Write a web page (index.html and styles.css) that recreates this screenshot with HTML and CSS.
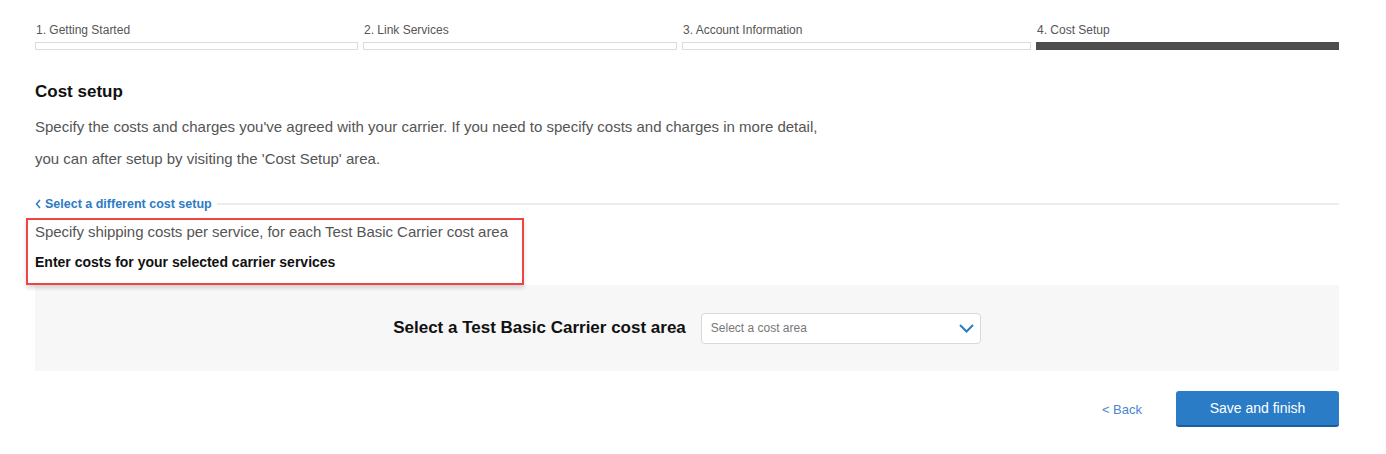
FILE: index.html
```html
<!DOCTYPE html>
<html lang="en">
    <head>
        <meta name="viewport" content="width=device-width, initial-scale=1">
        <title>Cost Setup</title>
        <link rel="stylesheet" href="styles.css">
    </head>
    <body>
        <div class="page">
            <div class="steps">
                <div class="step s-1">
                    <span class="stepLabel">1. Getting Started</span>
                    <div class="stepBar"></div>
                </div>
                <div class="step s-2">
                    <span class="stepLabel">2. Link Services</span>
                    <div class="stepBar"></div>
                </div>
                <div class="step s-3">
                    <span class="stepLabel">3. Account Information</span>
                    <div class="stepBar"></div>
                </div>
                <div class="step s-4 active">
                    <span class="stepLabel">4. Cost Setup</span>
                    <div class="stepBar"></div>
                </div>
            </div>

            <h2>Cost setup</h2>
            <p class="intro">Specify the costs and charges you've agreed with your carrier. If you need to specify costs and charges in more detail,<br>you can after setup by visiting the 'Cost Setup' area.</p>

            <div class="backRow">
                <a class="backLink" href="#">
                    <svg width="6" height="10" viewBox="0 0 6 10"><path d="M5 1 L1.5 5 L5 9" fill="none" stroke="#2d7bc4" stroke-width="1.5"/></svg>
                    Select a different cost setup
                </a>
                <div class="rule"></div>
            </div>

            <div class="highlight">
                <div class="subIntro">Specify shipping costs per service, for each Test Basic Carrier cost area</div>
                <div class="subTitle">Enter costs for your selected carrier services</div>
            </div>

            <div class="areaPanel">
                <label for="costArea">Select a Test Basic Carrier cost area</label>
                <div class="selectBox" id="costArea">
                    <span>Select a cost area</span>
                    <svg width="15" height="9" viewBox="0 0 15 9"><path d="M1 1 L7.5 7.5 L14 1" fill="none" stroke="#2d7bc4" stroke-width="2"/></svg>
                </div>
            </div>

            <div class="actions">
                <a class="prevLink" href="#">&lt; Back</a>
                <button type="button">Save and finish</button>
            </div>
        </div>
    </body>
</html>
```

FILE: styles.css
```css
body, html {
    padding: 0;
    margin: 0;
    font-family: "Liberation Sans", Arial, sans-serif;
    background: #fff;
}
* {
    box-sizing: border-box;
}
.page {
    width: 1304px;
    margin-left: 35px;
    padding-top: 22px;
}
.steps {
    display: flex;
    gap: 5px;
}
.step {
    display: flex;
    flex-direction: column;
}
.s-1 { width: 323px; }
.s-2 { width: 314px; }
.s-3 { width: 349px; }
.s-4 { width: 303px; }
.stepLabel {
    font-size: 12px;
    line-height: 16px;
    color: #555;
    padding-left: 1px;
}
.stepBar {
    margin-top: 4px;
    height: 8px;
    border: 1px solid #dcdcdc;
    background: #fff;
}
.step.active .stepBar {
    background: #4d4d4d;
    border-color: #4d4d4d;
}
h2 {
    margin: 32px 0 0 0;
    font-size: 17px;
    line-height: 20px;
    color: #111;
}
.intro {
    margin: 9px 0 0 0;
    font-size: 15px;
    line-height: 32px;
    color: #555;
}
.backRow {
    display: flex;
    align-items: center;
    margin-top: 21px;
    height: 16px;
}
.backLink {
    display: flex;
    align-items: center;
    gap: 4px;
    font-size: 12.5px;
    font-weight: bold;
    color: #2d7bc4;
    text-decoration: none;
    white-space: nowrap;
}
.rule {
    flex: 1;
    height: 2px;
    background: #ececec;
    margin-left: 5px;
}
.highlight {
    margin: 6px 0 0 -9px;
    width: 498px;
    border: 2px solid #ee4444;
    padding: 2px 0 0 7px;
    height: 67px;
    box-shadow: 0 3px 4px rgba(0, 0, 0, 0.15);
    position: relative;
    z-index: 1;
}
.subIntro {
    font-size: 15px;
    line-height: 20px;
    color: #555;
    letter-spacing: -0.05px;
}
.subTitle {
    margin-top: 10px;
    font-size: 14px;
    line-height: 20px;
    font-weight: bold;
    color: #111;
}
.areaPanel {
    display: flex;
    align-items: center;
    justify-content: center;
    gap: 15px;
    height: 86px;
    background: #f7f7f7;
}
.areaPanel label {
    font-size: 17px;
    font-weight: bold;
    color: #111;
}
.selectBox {
    width: 280px;
    height: 31px;
    border: 1px solid #d9d9d9;
    border-radius: 4px;
    background: #fff;
    display: flex;
    align-items: center;
    justify-content: space-between;
    padding: 0 6px 0 9px;
    font-size: 12px;
    color: #777;
}
.actions {
    display: flex;
    justify-content: flex-end;
    align-items: center;
    margin-top: 20px;
    gap: 34px;
}
.prevLink {
    font-size: 13px;
    color: #4a86cf;
    text-decoration: none;
}
button {
    width: 163px;
    height: 36px;
    border: 0;
    border-bottom: 2px solid #1d5f9e;
    border-radius: 3px;
    background: #2b7cc6;
    color: #fff;
    font-family: "Liberation Sans", Arial, sans-serif;
    font-size: 14px;
}
```
